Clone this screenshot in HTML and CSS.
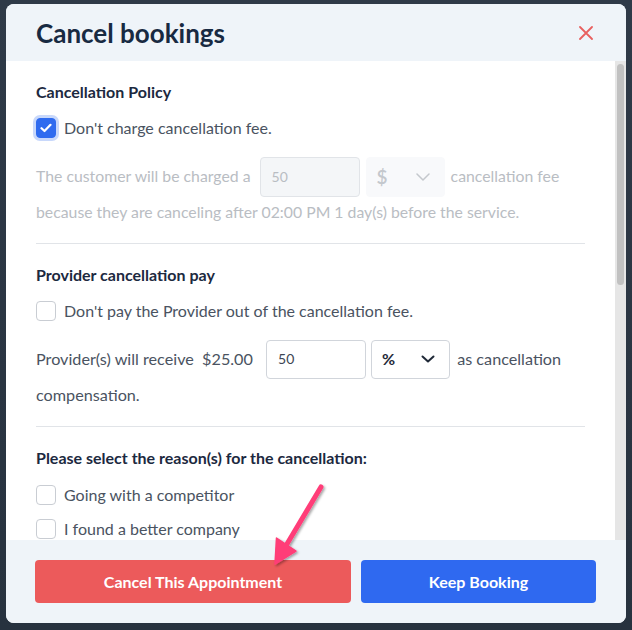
FILE: index.html
```html
<!DOCTYPE html>
<html lang="en">
<head>
<meta charset="utf-8">
<title>Cancel bookings</title>
<link rel="stylesheet" href="styles.css">
</head>
<body>
<div class="backdrop">
  <div class="modal">
    <header class="modal-header">
      <h1 class="modal-title">Cancel bookings</h1>
      <button class="close-btn" aria-label="Close">
        <svg width="14" height="14" viewBox="0 0 14 14"><path d="M1 1L13 13M13 1L1 13" stroke="#e8605f" stroke-width="1.8" stroke-linecap="round"/></svg>
      </button>
    </header>
    <div class="modal-body">
      <div class="body-content">
        <section class="section">
          <h2 class="section-title">Cancellation Policy</h2>
          <label class="check-row">
            <span class="checkbox checked">
              <svg width="12" height="10" viewBox="0 0 12 10"><path d="M1.5 5.2L4.5 8L10.5 1.8" fill="none" stroke="#fff" stroke-width="2.2" stroke-linecap="round" stroke-linejoin="round"/></svg>
            </span>
            <span class="check-label">Don't charge cancellation fee.</span>
          </label>
          <p class="flow disabled">The customer will be charged a <span class="field field-num disabled-field">50</span><span class="field field-sel disabled-sel"><span>$</span><svg class="chev" width="14" height="8" viewBox="0 0 14 8"><path d="M1 1L7 7L13 1" fill="none" stroke="#c4c8cd" stroke-width="1.5" stroke-linecap="round" stroke-linejoin="round"/></svg></span> cancellation fee because they are canceling after 02:00 PM 1 day(s) before the service.</p>
        </section>
        <section class="section">
          <h2 class="section-title">Provider cancellation pay</h2>
          <label class="check-row">
            <span class="checkbox"></span>
            <span class="check-label">Don't pay the Provider out of the cancellation fee.</span>
          </label>
          <p class="flow flow-pay">Provider(s) will receive&nbsp; $25.00 <span class="field field-num field-b">50</span><span class="field field-sel sel-pct field-b"><span>%</span><svg class="chev" width="14" height="8" viewBox="0 0 14 8"><path d="M1.5 1.5L7 6.5L12.5 1.5" fill="none" stroke="#1f2937" stroke-width="2" stroke-linecap="round" stroke-linejoin="round"/></svg></span> as cancellation compensation.</p>
        </section>
        <section class="section last">
          <h2 class="section-title">Please select the reason(s) for the cancellation:</h2>
          <label class="check-row reason"><span class="checkbox"></span><span class="check-label">Going with a competitor</span></label>
          <label class="check-row reason"><span class="checkbox"></span><span class="check-label">I found a better company</span></label>
          <label class="check-row reason"><span class="checkbox"></span><span class="check-label">Price is too high</span></label>
          <label class="check-row reason"><span class="checkbox"></span><span class="check-label">Scheduling conflict</span></label>
        </section>
      </div>
      <div class="scrollbar"><div class="scroll-thumb"></div></div>
    </div>
    <footer class="modal-footer">
      <button class="btn btn-cancel">Cancel This Appointment</button>
      <button class="btn btn-keep">Keep Booking</button>
    </footer>
  </div>
  <svg class="annotation" width="632" height="630" viewBox="0 0 632 630">
    <defs>
      <filter id="sh" x="-20%" y="-20%" width="140%" height="140%">
        <feDropShadow dx="1.5" dy="1.5" stdDeviation="1.2" flood-color="#000" flood-opacity="0.35"/>
      </filter>
    </defs>
    <g filter="url(#sh)">
      <path d="M321 487L284 549" stroke="#ff3d78" stroke-width="5" stroke-linecap="round"/>
      <path d="M275 564L276.5 538L296 551Z" fill="#ff3d78" stroke="#ff3d78" stroke-width="1.5" stroke-linejoin="round"/>
    </g>
  </svg>
</div>
</body>
</html>
```
FILE: styles.css
```css
* { box-sizing: border-box; }
html, body { margin: 0; padding: 0; }
body {
  width: 632px;
  height: 630px;
  overflow: hidden;
  background: #2c3846;
  font-family: Lato, "Open Sans", Arial, sans-serif;
}
.backdrop {
  position: relative;
  width: 632px;
  height: 630px;
  padding: 4px 6px 7px 6px;
  background: linear-gradient(180deg, #2f3a48 0%, #2a3542 60%, #27323f 100%);
}
.modal {
  width: 620px;
  height: 619px;
  background: #fff;
  border-radius: 8px;
  overflow: hidden;
  display: flex;
  flex-direction: column;
}
.modal-header {
  flex: 0 0 57px;
  background: #eff4f9;
  display: flex;
  align-items: center;
  justify-content: space-between;
  padding: 0 33px 0 30px;
}
.modal-title {
  margin: 0;
  font-size: 26px;
  font-weight: 700;
  color: #182a42;
}
.close-btn {
  border: 0;
  background: transparent;
  padding: 0;
  width: 14px;
  height: 14px;
  display: flex;
}
.modal-body {
  flex: 1 1 auto;
  min-height: 0;
  display: flex;
}
.body-content {
  flex: 1 1 auto;
  overflow: hidden;
  padding: 20px 30px 0 30px;
}
.scrollbar {
  flex: 0 0 11px;
  background: #e6e6e6;
  padding: 3px 2px 0 2px;
}
.scroll-thumb {
  height: 221px;
  background: #c1c1c1;
  border-radius: 4px;
}
.section {
  border-bottom: 1px solid #e1e4e8;
  padding-bottom: 13px;
  margin-bottom: 20px;
}
.section.last { border-bottom: 0; }
.section-title {
  margin: 0 0 15px 0;
  font-size: 16px;
  line-height: 22px;
  font-weight: 700;
  color: #1c2940;
}
.last .section-title { margin-bottom: 16px; }
.check-row {
  display: flex;
  align-items: center;
  gap: 8px;
  height: 20px;
  margin-bottom: 20px;
}
.check-row.reason { margin-bottom: 14px; }
.checkbox {
  width: 20px;
  height: 20px;
  border: 1px solid #c9cdd3;
  border-radius: 4px;
  background: #fff;
  flex: 0 0 20px;
  display: flex;
  align-items: center;
  justify-content: center;
}
.checkbox.checked {
  background: #2f6bef;
  border-color: #2f6bef;
  box-shadow: 0 0 0 3px #c8d8fb;
}
.check-label {
  font-size: 16px;
  line-height: 20px;
  color: #4a5361;
}
.flow {
  margin: 0;
  font-size: 15.8px;
  line-height: 36px;
  color: #4a5361;
}
.flow-pay { font-size: 16.2px; }
.flow.disabled { color: #b9bdc3; }
.field {
  display: inline-flex;
  align-items: center;
  vertical-align: middle;
  height: 40px;
  margin-top: -5px;
  margin-bottom: -3px;
  border: 1px solid #d1d5db;
  border-radius: 4px;
  font-size: 14px;
  line-height: 20px;
  color: #3d4654;
}
.field-b { height: 39px; margin-top: -5px; margin-bottom: -2px; }
.field-num {
  width: 100px;
  padding-left: 11px;
  margin-left: 5px;
}
.field-num.field-b { margin-left: 9px; }
.field-sel {
  width: 79px;
  padding: 0 14px 0 10px;
  justify-content: space-between;
  margin-left: 6px;
  margin-right: 2px;
  font-size: 16px;
  font-weight: 700;
}
.field-sel.field-b { margin-left: 5px; margin-right: 3px; }
.disabled-field {
  background: #f4f6f8;
  border-color: #e1e4e8;
  color: #b9bdc3;
}
.disabled-sel {
  background: #f8f9fb;
  border-color: #f8f9fb;
  color: #c4c8cd;
  font-weight: 600;
  font-size: 19px;
}
.sel-pct { color: #1f2937; }
.modal-footer {
  flex: 0 0 83px;
  background: #eff4f9;
  display: flex;
  gap: 10px;
  padding: 20px 30px 20px 29px;
}
.btn {
  border: 0;
  border-radius: 4px;
  height: 43px;
  color: #fff;
  font-family: Lato, "Open Sans", Arial, sans-serif;
  font-size: 16px;
  font-weight: 700;
}
.btn-cancel { flex: 0 0 316px; background: #ec5a5b; }
.btn-keep { flex: 1 1 auto; background: #2f69f0; }
.annotation {
  position: absolute;
  left: 0;
  top: 0;
  pointer-events: none;
}
```
